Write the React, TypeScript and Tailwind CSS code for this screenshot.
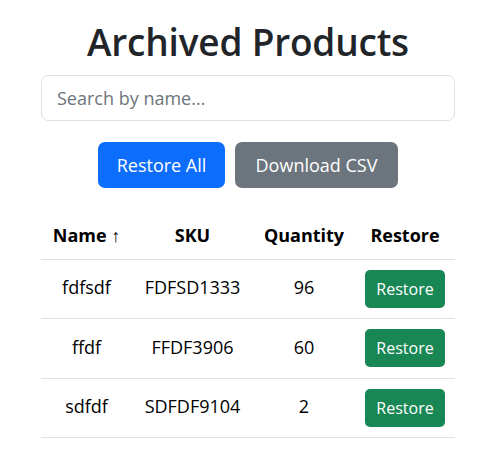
import React, { useState } from "react";

const rows = [
  { name: "fdfsdf", sku: "FDFSD1333", qty: 96 },
  { name: "ffdf", sku: "FFDF3906", qty: 60 },
  { name: "sdfdf", sku: "SDFDF9104", qty: 2 },
];

export default function App() {
  const [q, setQ] = useState("");
  return (
    <div
      className="min-h-screen bg-white text-[#212529] pl-[41px] pr-[32px] pt-[18px]"
      style={{ fontFamily: '"Open Sans", "Noto Sans", sans-serif' }}
    >
      <h1 className="text-center text-[37px] font-semibold leading-[48px] tracking-[-0.2px] mb-[9px]">
        Archived Products
      </h1>
      <input
        value={q}
        onChange={(e) => setQ(e.target.value)}
        placeholder="Search by name..."
        className="w-full h-[46px] border border-[#dee2e6] rounded-[7px] px-[15px] text-[18px] text-[#212529] placeholder:text-[#6c757d] outline-none"
      />
      <div className="flex justify-center gap-[10px] mt-[21px]">
        <button className="h-[46px] w-[127px] rounded-[7px] bg-[#0d6efd] text-white text-[18px]">
          Restore All
        </button>
        <button className="h-[46px] w-[163px] rounded-[7px] bg-[#6c757d] text-white text-[18px]">
          Download CSV
        </button>
      </div>
      <table className="w-full mt-[24px] border-collapse text-center text-[18px] text-black">
        <thead>
          <tr className="h-[47px] border-b border-[#dee2e6]">
            <th className="w-[91px] font-bold">Name ↑</th>
            <th className="w-[121px] font-bold">SKU</th>
            <th className="w-[102px] font-bold">Quantity</th>
            <th className="font-bold">Restore</th>
          </tr>
        </thead>
        <tbody>
          {rows.map((r) => (
            <tr key={r.sku} className="h-[59.5px] border-b border-[#dee2e6]">
              <td className="pb-[2px]">{r.name}</td>
              <td className="pb-[2px]">{r.sku}</td>
              <td className="pb-[2px]">{r.qty}</td>
              <td>
                <button className="h-[38px] w-[80px] ml-[0px] rounded-[5px] bg-[#198754] text-white text-[16px]">
                  Restore
                </button>
              </td>
            </tr>
          ))}
        </tbody>
      </table>
    </div>
  );
}
